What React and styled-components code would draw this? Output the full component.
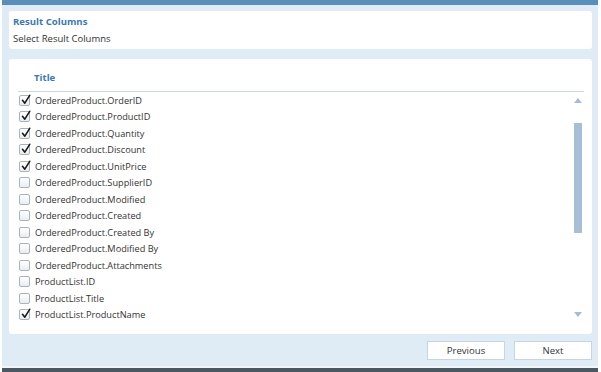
import styled, { createGlobalStyle } from 'styled-components'

const GlobalStyle = createGlobalStyle`
  html, body {
    margin: 0;
    padding: 0;
    background: #ffffff;
  }
  body {
    font-family: "Open Sans", "Noto Sans", sans-serif;
  }
`

const columns = [
  { name: 'OrderedProduct.OrderID', checked: true },
  { name: 'OrderedProduct.ProductID', checked: true },
  { name: 'OrderedProduct.Quantity', checked: true },
  { name: 'OrderedProduct.Discount', checked: true },
  { name: 'OrderedProduct.UnitPrice', checked: true },
  { name: 'OrderedProduct.SupplierID', checked: false },
  { name: 'OrderedProduct.Modified', checked: false },
  { name: 'OrderedProduct.Created', checked: false },
  { name: 'OrderedProduct.Created By', checked: false },
  { name: 'OrderedProduct.Modified By', checked: false },
  { name: 'OrderedProduct.Attachments', checked: false },
  { name: 'ProductList.ID', checked: false },
  { name: 'ProductList.Title', checked: false },
  { name: 'ProductList.ProductName', checked: true },
]

function CheckMark () {
  return (
    <svg width="12" height="12" viewBox="0 0 12 12">
      <path d="M2.5 6.3 L4.8 9.2 L9.7 1.3" fill="none" stroke="#1a1a1a" strokeWidth="1.6" strokeLinecap="round" strokeLinejoin="round" />
    </svg>
  )
}

function App () {
  return (
    <>
      <GlobalStyle />
      <Frame>
        <Content>
          <HeaderCard>
            <CardTitle>Result Columns</CardTitle>
            <CardSubtitle>Select Result Columns</CardSubtitle>
          </HeaderCard>
          <ListCard>
            <ColumnHeader>Title</ColumnHeader>
            <ListBody>
              <Rows>
                {columns.map((col) => (
                  <Row key={col.name}>
                    <Box>{col.checked && <CheckMark />}</Box>
                    <RowLabel>{col.name}</RowLabel>
                  </Row>
                ))}
              </Rows>
              <Scrollbar>
                <Arrow />
                <Track>
                  <Thumb />
                </Track>
                <Arrow down />
              </Scrollbar>
            </ListBody>
          </ListCard>
          <Footer>
            <Button>Previous</Button>
            <Button>Next</Button>
          </Footer>
        </Content>
      </Frame>
      <BottomEdge />
    </>
  )
}

export default App

const Frame = styled.div`
  margin: 0 3px 0 2px;
  height: 366px;
  box-sizing: border-box;
  border-top: 5px solid #5a8fbb;
  background: #dfebf5;
`
const Content = styled.div`
  padding: 6px 6px 0 7px;
  display: flex;
  flex-direction: column;
`
const HeaderCard = styled.div`
  background: #ffffff;
  border-radius: 3px;
  height: 38px;
  box-sizing: border-box;
  padding: 4px 4px 0 4px;
  display: flex;
  flex-direction: column;
`
const CardTitle = styled.div`
  color: #3b78b3;
  font-weight: 700;
  font-size: 9.6px;
  line-height: 14px;
`
const CardSubtitle = styled.div`
  color: #333333;
  font-size: 9.5px;
  line-height: 20px;
`
const ListCard = styled.div`
  margin-top: 10px;
  background: #ffffff;
  border-radius: 3px;
  height: 275px;
  box-sizing: border-box;
  padding: 11px 8px 0 9px;
  display: flex;
  flex-direction: column;
`
const ColumnHeader = styled.div`
  color: #3b78b3;
  font-weight: 700;
  font-size: 9.6px;
  line-height: 16px;
  padding: 0 0 5px 16px;
  border-bottom: 1px solid #cfd9e2;
`
const ListBody = styled.div`
  display: flex;
`
const Rows = styled.div`
  flex: 1;
  display: flex;
  flex-direction: column;
`
const Row = styled.div`
  height: 16.5px;
  display: flex;
  align-items: center;
  gap: 5px;
  padding-left: 1px;
`
const Box = styled.div`
  width: 11px;
  height: 11px;
  box-sizing: border-box;
  border: 1px solid #a9b3bd;
  border-radius: 2px;
  background: linear-gradient(#ffffff, #e9edf1);
  position: relative;
  svg {
    position: absolute;
    left: 0;
    top: -2px;
  }
`
const RowLabel = styled.span`
  color: #333333;
  font-size: 9.2px;
  white-space: nowrap;
`
const Scrollbar = styled.div`
  width: 12px;
  display: flex;
  flex-direction: column;
  align-items: center;
  padding-top: 6px;
`
const Arrow = styled.div`
  width: 0;
  height: 0;
  border-left: 4px solid transparent;
  border-right: 4px solid transparent;
  ${({ down }) => down
    ? 'border-top: 5px solid #a6bdd3; margin-top: 3px;'
    : 'border-bottom: 5px solid #a6bdd3;'}
`
const Track = styled.div`
  height: 206px;
  width: 8px;
  padding-top: 20px;
  box-sizing: border-box;
`
const Thumb = styled.div`
  width: 8px;
  height: 110px;
  background: #a7bfd6;
`
const Footer = styled.div`
  display: flex;
  justify-content: flex-end;
  gap: 9px;
  margin-top: 7px;
`
const Button = styled.button`
  width: 78px;
  height: 19px;
  padding: 0;
  background: #ffffff;
  border: 1px solid #c6d5e3;
  border-radius: 0;
  color: #333333;
  font-family: "Open Sans", "Noto Sans", sans-serif;
  font-size: 9.6px;
`
const BottomEdge = styled.div`
  margin: 0 3px 0 2px;
  height: 2px;
  background: #f0f6fa;
  border-bottom: 4px solid #4b5761;
`
